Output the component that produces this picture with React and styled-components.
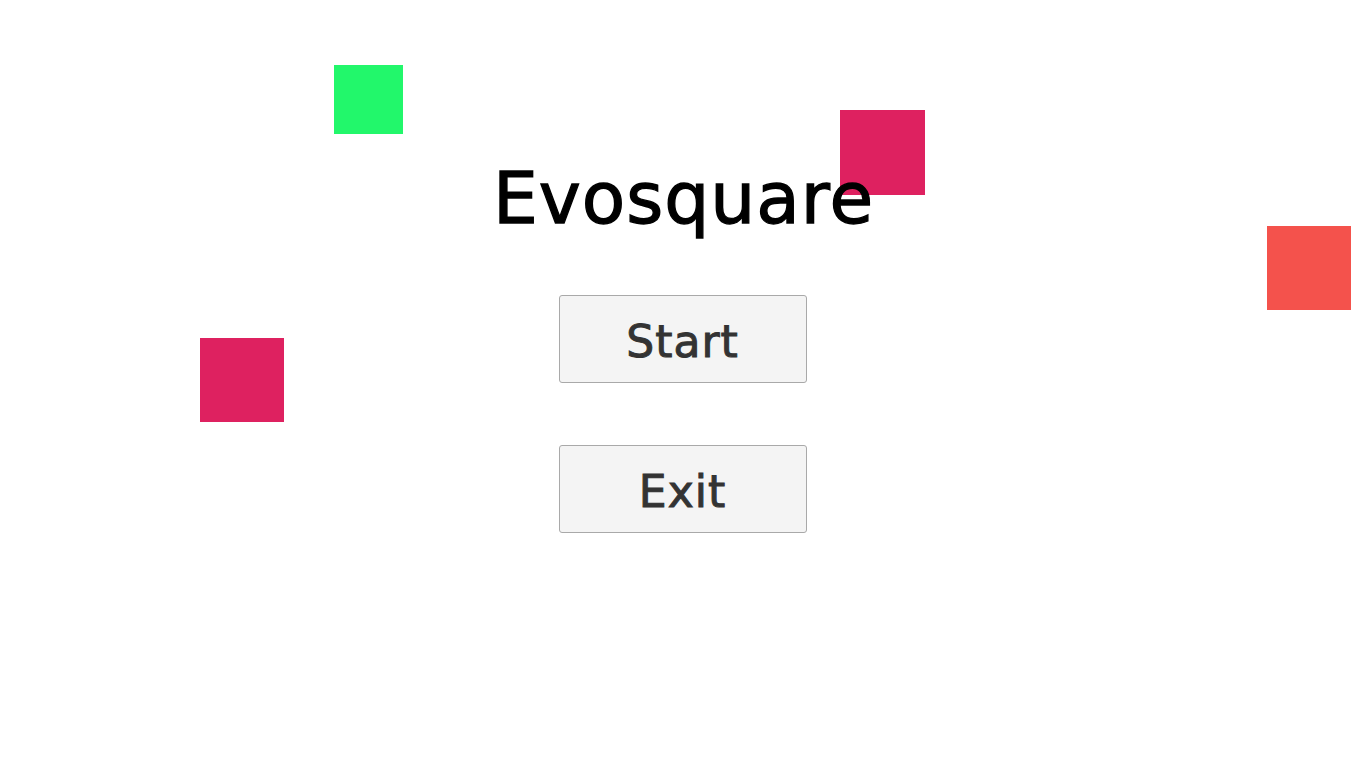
import React from "react";
import styled, { createGlobalStyle } from "styled-components";

const Global = createGlobalStyle`
  html, body { margin: 0; padding: 0; background: #ffffff; }
  body { font-family: "DejaVu Sans", "Liberation Sans", sans-serif; }
  #root { min-height: 100vh; }
`;

const Stage = styled.div`
  position: relative;
  width: 100%;
  height: 766px;
  overflow: hidden;
  background: #ffffff;
`;

const Square = styled.div`
  position: absolute;
  left: ${(p) => p.$x}px;
  top: ${(p) => p.$y}px;
  width: ${(p) => p.$size}px;
  height: ${(p) => p.$size}px;
  background: ${(p) => p.$color};
  z-index: 0;
`;

const Menu = styled.main`
  position: relative;
  z-index: 1;
  display: flex;
  flex-direction: column;
  align-items: center;
  padding-top: 163px;
`;

const Title = styled.h1`
  margin: 0 0 61px 0;
  font-family: "DejaVu Sans", sans-serif;
  font-weight: 400;
  font-size: 71px;
  line-height: 71px;
  letter-spacing: 1px;
  color: #000000;
  text-indent: 2px;
  -webkit-text-stroke: 1.3px #000000;
`;

const Buttons = styled.div`
  display: flex;
  flex-direction: column;
  align-items: center;
  gap: 62px;
`;

const MenuButton = styled.button`
  box-sizing: border-box;
  width: 248px;
  height: 88px;
  display: flex;
  align-items: center;
  justify-content: center;
  padding: 6px 0 0 0;
  background: #f4f4f4;
  border: 1px solid #a9a9a9;
  border-radius: 3px;
  font-family: "DejaVu Sans", sans-serif;
  font-size: 44px;
  line-height: 44px;
  letter-spacing: 1px;
  color: #333333;
  -webkit-text-stroke: 1px #333333;
  cursor: pointer;
`;

const squares = [
  { x: 334, y: 65, size: 69, color: "#22f76b" },
  { x: 840, y: 110, size: 85, color: "#de2160" },
  { x: 1267, y: 226, size: 84, color: "#f4524c" },
  { x: 200, y: 338, size: 84, color: "#de2160" },
];

export default function App() {
  return (
    <Stage>
      <Global />
      {squares.map((s, i) => (
        <Square key={i} $x={s.x} $y={s.y} $size={s.size} $color={s.color} />
      ))}
      <Menu>
        <Title>Evosquare</Title>
        <Buttons>
          <MenuButton>Start</MenuButton>
          <MenuButton>Exit</MenuButton>
        </Buttons>
      </Menu>
    </Stage>
  );
}
